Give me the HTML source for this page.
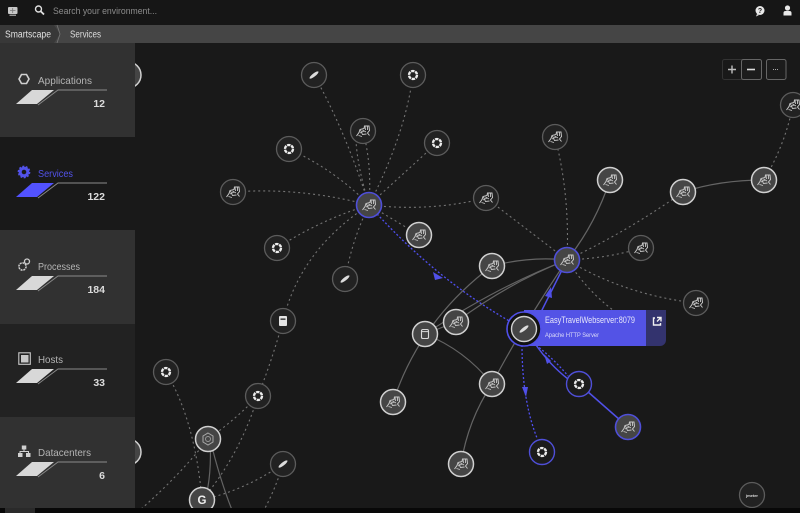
<!DOCTYPE html>
<html><head><meta charset="utf-8"><style>
html,body{margin:0;padding:0;background:#191919;width:800px;height:513px;overflow:hidden}
svg{display:block;filter:blur(.35px)}
text{font-family:"Liberation Sans",sans-serif}
.dash{fill:none;stroke:#747474;stroke-width:1.1;stroke-dasharray:2 3}
.sol{fill:none;stroke:#646464;stroke-width:1.2}
.bd{fill:none;stroke:#4f4ff0;stroke-width:1.3;stroke-dasharray:2 2}
.bs{fill:none;stroke:#5050e8;stroke-width:1.5}
.d{fill:#222;stroke:#5c5c5c;stroke-width:1.3}
.b{fill:#454545;stroke:#d0d0d0;stroke-width:1.5}
.h{fill:#454545;stroke:#4f4fd8;stroke-width:1.6}
.r{fill:#1c1c1c;stroke:#4f4fd8;stroke-width:1.4}
.lbl{font-size:10.5px;fill:#b4b4b4}
.cnt{font-size:10.5px;fill:#dcdcdc;text-anchor:end;font-weight:bold}
.ln{fill:none;stroke:#8a8a8a;stroke-width:.9}
.bar{fill:#d8d8d8}
</style></head><body>
<svg width="800" height="513" viewBox="0 0 800 513" xmlns="http://www.w3.org/2000/svg">
<defs>
<g id="cat" fill="none" stroke="#c8c8c8">
<path d="M-6.500 5L-4 1.500L-3 -1.500L1 -2.500L1.500 -5L6 -5L6.500 -0.500L4.500 2L6.500 4.500" stroke-width="1"/>
<path d="M-4.500 4.500L-1 5.500M-2.500 -1L-0.500 3.500L3.500 3M-0.500 -1L3 1M2 -4.500L2.500 -1M4.500 -4.500L4.500 -1M-3 2L1 0" stroke-width=".9"/>
</g>
<g id="ring"><circle r="4" fill="none" stroke="#ededed" stroke-width="2.300" stroke-dasharray="3.400 .8"/></g>
<g id="fea"><ellipse rx="5.600" ry="1.600" transform="rotate(-38)" fill="#dcdcdc"/></g>
<g id="db"><rect x="-3.500" y="-4.500" width="7" height="9" rx="1.400" fill="none" stroke="#d8d8d8" stroke-width="1.100"/><path d="M-3.500 -2.400H3.500" stroke="#d8d8d8" fill="none"/></g>
</defs>

<rect width="800" height="513" fill="#191919"/>

<!-- dashed grey edges -->
<path class="dash" d="M369 205Q345 130 314 75"/>
<path class="dash" d="M369 205Q405 135 413 75"/>
<path class="dash" d="M369 205Q372 165 363 131"/>
<path class="dash" d="M369 205Q357 165 356 140"/>
<path class="dash" d="M369 205Q335 170 289 149"/>
<path class="dash" d="M369 205L437 143"/>
<path class="dash" d="M369 205Q300 187 233 192"/>
<path class="dash" d="M369 205Q320 220 277 248"/>
<path class="dash" d="M369 205Q352 240 345 279"/>
<path class="dash" d="M369 205L419 235"/>
<path class="dash" d="M369 205Q430 212 486 198"/>
<path class="dash" d="M369 205Q300 250 283 321"/>
<path class="dash" d="M283 321Q272 360 258 396"/>
<path class="dash" d="M258 396Q235 420 208 439"/>
<path class="dash" d="M258 396Q240 455 202 500"/>
<path class="dash" d="M166 372Q195 420 202 500"/>
<path class="dash" d="M208 439Q180 475 140 510"/>
<path class="dash" d="M283 464Q245 490 202 500"/>
<path class="dash" d="M283 464Q275 490 264 510"/>
<path class="dash" d="M486 198L567 260"/>
<path class="dash" d="M567 260Q630 230 683 192"/>
<path class="dash" d="M567 260Q610 258 641 248"/>
<path class="dash" d="M567 260Q625 295 696 303"/>
<path class="dash" d="M567 260Q570 195 555 137"/>
<path class="dash" d="M567 260Q590 295 620 315"/>
<path class="dash" d="M764 180Q785 145 793 105"/>

<!-- solid grey edges -->
<path class="sol" d="M567 260Q595 225 610 180"/>
<path class="sol" d="M683 192Q720 180 764 180"/>
<path class="sol" d="M492 266Q530 256 567 260"/>
<path class="sol" d="M425 334Q500 285 567 260"/>
<path class="sol" d="M393 402Q420 320 492 266"/>
<path class="sol" d="M456 322Q510 282 567 260"/>
<path class="sol" d="M425 334Q465 350 492 384"/>
<path class="sol" d="M492 384Q520 330 567 260"/>
<path class="sol" d="M461 464Q468 420 492 384"/>
<path class="sol" d="M425 334L456 322"/>
<path class="sol" d="M210 439Q212 475 205 500"/>
<path class="sol" d="M210 439Q220 480 232 510"/>

<!-- blue edges -->
<path class="bd" d="M369 205Q440 285 524 329"/>
<polygon points="433,272 443,278 435,280" fill="#5050e8"/>
<path class="bs" d="M567 260L541 312"/>
<polygon points="551,287 552,298 545,296" fill="#5050e8"/>
<path class="bd" d="M522 345Q522 400 537 438" stroke-width="1.500"/>
<polygon points="522,387 528,387 526,397" fill="#5050e8"/>
<path class="bs" d="M536 345Q550 365 568 379"/>
<path class="bd" d="M536 345Q555 360 568 376"/>
<polygon points="544,354 551,361 547,364" fill="#5050e8"/>
<path class="bs" d="M579 384L628 427"/>

<!-- dim nodes -->
<g class="d">
<circle cx="314" cy="75" r="12.500"/><circle cx="413" cy="75" r="12.500"/><circle cx="363" cy="131" r="12.500"/>
<circle cx="289" cy="149" r="12.500"/><circle cx="437" cy="143" r="12.500"/><circle cx="233" cy="192" r="12.500"/>
<circle cx="277" cy="248" r="12.500"/><circle cx="345" cy="279" r="12.500"/><circle cx="486" cy="198" r="12.500"/>
<circle cx="283" cy="321" r="12.500"/><circle cx="166" cy="372" r="12.500"/><circle cx="258" cy="396" r="12.500"/>
<circle cx="283" cy="464" r="12.500"/><circle cx="555" cy="137" r="12.500"/><circle cx="641" cy="248" r="12.500"/>
<circle cx="696" cy="303" r="12.500"/><circle cx="793" cy="105" r="12.500"/><circle cx="752" cy="495" r="12.500"/>
</g>
<!-- bright nodes -->
<g class="b">
<circle cx="419" cy="235" r="12.500"/><circle cx="492" cy="266" r="12.500"/><circle cx="610" cy="180" r="12.500"/>
<circle cx="683" cy="192" r="12.500"/><circle cx="764" cy="180" r="12.500"/><circle cx="456" cy="322" r="12.500"/>
<circle cx="425" cy="334" r="12.500"/><circle cx="492" cy="384" r="12.500"/><circle cx="393" cy="402" r="12.500"/>
<circle cx="461" cy="464" r="12.500"/><circle cx="208" cy="439" r="12.500"/><circle cx="202" cy="500" r="12.500"/>
<circle cx="128" cy="75" r="13"/><circle cx="128" cy="452" r="13"/>
</g>
<circle class="h" cx="369" cy="205" r="12.500"/>
<circle class="h" cx="567" cy="260" r="12.500"/>
<circle class="r" cx="579" cy="384" r="12.500"/>
<circle class="h" cx="628" cy="427" r="12.500"/>
<circle class="r" cx="542" cy="452" r="12.500"/>

<!-- popup -->
<rect x="524" y="310" width="122" height="36" fill="#5353e6"/>
<path d="M646 310H666V340a6 6 0 0 1-6 6H646Z" fill="#33336e"/>
<circle cx="524" cy="329" r="17" fill="#111" stroke="#5050e8" stroke-width="1.600"/>
<circle cx="524" cy="329" r="12.500" fill="#454545" stroke="#d0d0d0" stroke-width="1.400"/>
<text x="545" y="323" font-size="9.300" fill="#e6e6fb" textLength="90" lengthAdjust="spacingAndGlyphs">EasyTravelWebserver:8079</text>
<text x="545" y="337" font-size="6.800" fill="#dcdcf8" textLength="54" lengthAdjust="spacingAndGlyphs">Apache HTTP Server</text>
<path d="M655 318h-1.500v7h7V323M657 317.500h4v4M661 317.500l-4 4" fill="none" stroke="#f0f0f0" stroke-width="1.400"/>

<!-- node icons -->
<g>
<use href="#fea" x="314" y="75"/><use href="#ring" x="413" y="75"/><use href="#cat" x="363" y="131"/>
<use href="#ring" x="289" y="149"/><use href="#ring" x="437" y="143"/><use href="#cat" x="233" y="192"/>
<use href="#ring" x="277" y="248"/><use href="#fea" x="345" y="279"/><use href="#cat" x="486" y="198"/>
<use href="#ring" x="166" y="372"/><use href="#ring" x="258" y="396"/><use href="#fea" x="283" y="464"/>
<use href="#cat" x="555" y="137"/><use href="#cat" x="641" y="248"/><use href="#cat" x="696" y="303"/>
<use href="#cat" x="793" y="105"/><use href="#cat" x="419" y="235"/><use href="#cat" x="492" y="266"/>
<use href="#cat" x="610" y="180"/><use href="#cat" x="683" y="192"/><use href="#cat" x="764" y="180"/>
<use href="#cat" x="456" y="322"/><use href="#db" x="425" y="334"/><use href="#cat" x="492" y="384"/>
<use href="#cat" x="393" y="402"/><use href="#cat" x="461" y="464"/><use href="#cat" x="369" y="205"/>
<use href="#cat" x="567" y="260"/><use href="#ring" x="579" y="384"/><use href="#cat" x="628" y="427"/>
<use href="#ring" x="542" y="452"/><use href="#fea" x="524" y="329"/>
</g>
<rect x="279" y="316" width="8" height="10" rx="1" fill="#e4e4e4"/><rect x="280.500" y="318.500" width="5" height="1.300" fill="#222"/>
<polygon points="208,433 213,436 213,442 208,445 203,442 203,436" fill="none" stroke="#aaa"/>
<circle cx="208" cy="439" r="2.500" fill="none" stroke="#999"/>
<text x="202" y="504" font-size="11.500" font-weight="bold" fill="#f0f0f0" text-anchor="middle">G</text>
<text x="752" y="497" font-size="4" font-weight="bold" fill="#ddd" text-anchor="middle">jmeter</text>

<!-- zoom controls -->
<rect x="722.500" y="59.500" width="39" height="20" rx="2" fill="#191919" stroke="#333"/>
<rect x="741.500" y="59.500" width="20" height="20" rx="2" fill="#1c1c1c" stroke="#666"/>
<rect x="766.500" y="59.500" width="19.500" height="20" rx="2" fill="#1c1c1c" stroke="#666"/>
<path d="M732 65.500v8M728 69.500h8" stroke="#bdbdbd" stroke-width="1.400"/>
<path d="M747 69.500h8" stroke="#dcdcdc" stroke-width="1.600"/>
<path d="M773 69.500h6" stroke="#aaa" stroke-width="1" stroke-dasharray="1 1"/>

<!-- top bar -->
<rect width="800" height="25" fill="#161616"/>
<rect y="25" width="800" height="18" fill="#454545"/>
<path d="M0 25H54L60 34L54 43H0Z" fill="#383838"/>
<path d="M57 25L60 34L57 43" fill="none" stroke="#777" stroke-width=".8"/>
<text x="5" y="37.500" font-size="9.800" fill="#e0e0e0" textLength="46" lengthAdjust="spacingAndGlyphs">Smartscape</text>
<text x="70" y="37.500" font-size="9.800" fill="#dcdcdc" textLength="31" lengthAdjust="spacingAndGlyphs">Services</text>
<rect x="8" y="7" width="9.500" height="7" rx="1" fill="#c8c8c8"/><path d="M9.500 15.200h6.500" stroke="#c8c8c8"/><path d="M10 10.500h5.500M12.700 8v5" stroke="#777" stroke-width=".8"/>
<circle cx="38.500" cy="9" r="3" fill="none" stroke="#e0e0e0" stroke-width="1.400"/><path d="M40.700 11.200l3.300 3.300" stroke="#e0e0e0" stroke-width="1.800"/>
<text x="53" y="14" font-size="9.500" fill="#8c8c8c" textLength="104" lengthAdjust="spacingAndGlyphs">Search your environment...</text>
<circle cx="760" cy="10.500" r="4.500" fill="#e8e8e8"/><path d="M757 14l-1 2.500 3-1.500Z" fill="#e8e8e8"/><text x="760" y="13" font-size="7" font-weight="bold" fill="#222" text-anchor="middle">?</text>
<circle cx="787.500" cy="8" r="2.600" fill="#e8e8e8"/><path d="M783.500 15.500v-2.500q0-2 2-2h4q2 0 2 2v2.500Z" fill="#e8e8e8"/>

<!-- sidebar -->
<rect y="43" width="135" height="94" fill="#313131"/>
<rect y="137" width="135" height="93" fill="#191919"/>
<rect y="230" width="135" height="94" fill="#313131"/>
<rect y="324" width="135" height="93" fill="#222"/>
<rect y="417" width="135" height="91" fill="#313131"/>

<polygon points="19,79 21.500,74.500 26.500,74.500 29,79 26.500,83.500 21.500,83.500" fill="none" stroke="#d0d0d0" stroke-width="1.600"/>
<text x="38" y="84" class="lbl" textLength="54" lengthAdjust="spacingAndGlyphs">Applications</text>
<polygon class="bar" points="16,104 37,104 54,90 32,90"/>
<path class="ln" d="M38 105L58 90H107"/>
<text x="105" y="107" class="cnt" font-weight="normal">12</text>

<circle cx="24" cy="172" r="3.800" fill="none" stroke="#5252ea" stroke-width="3"/><circle cx="24" cy="172" r="5.600" fill="none" stroke="#5252ea" stroke-width="1.500" stroke-dasharray="2 1.500"/>
<text x="38" y="177" class="lbl" style="fill:#5252ea" textLength="35" lengthAdjust="spacingAndGlyphs">Services</text>
<polygon points="16,197 37,197 54,183 32,183" fill="#5252ff"/>
<path class="ln" d="M38 198L58 183H107"/>
<text x="105" y="200" class="cnt">122</text>

<circle cx="22.500" cy="266.500" r="3.600" fill="none" stroke="#d0d0d0" stroke-width="1.500" stroke-dasharray="2 .8"/>
<circle cx="27" cy="261.500" r="2.500" fill="none" stroke="#d0d0d0" stroke-width="1.300"/>
<text x="38" y="270" class="lbl" textLength="42" lengthAdjust="spacingAndGlyphs">Processes</text>
<polygon class="bar" points="16,290 37,290 54,276 32,276"/>
<path class="ln" d="M38 291L58 276H107"/>
<text x="105" y="293" class="cnt">184</text>

<rect x="21" y="355" width="7.500" height="7.500" fill="#c8c8c8"/><rect x="18.800" y="352.800" width="11.500" height="11.500" fill="none" stroke="#c8c8c8" stroke-width="1.100"/>
<text x="38" y="363" class="lbl" textLength="25" lengthAdjust="spacingAndGlyphs">Hosts</text>
<polygon class="bar" points="16,383 37,383 54,369 32,369"/>
<path class="ln" d="M38 384L58 369H107"/>
<text x="105" y="386" class="cnt">33</text>

<rect x="21.800" y="445.500" width="4.500" height="4" fill="#d0d0d0"/><rect x="18" y="453" width="4.500" height="4" fill="#d0d0d0"/><rect x="26" y="453" width="4.500" height="4" fill="#d0d0d0"/><path d="M24 449.500v2M20 453v-1.500h8.500v1.500" fill="none" stroke="#d0d0d0"/>
<text x="38" y="456" class="lbl" textLength="53" lengthAdjust="spacingAndGlyphs">Datacenters</text>
<polygon class="bar" points="16,476 37,476 54,462 32,462"/>
<path class="ln" d="M38 477L58 462H107"/>
<text x="105" y="479" class="cnt">6</text>

<!-- bottom strip -->
<rect y="508" width="800" height="5" fill="#080808"/>
<rect x="5" y="508" width="30" height="5" fill="#2a2a2a"/>
</svg>
</body></html>
